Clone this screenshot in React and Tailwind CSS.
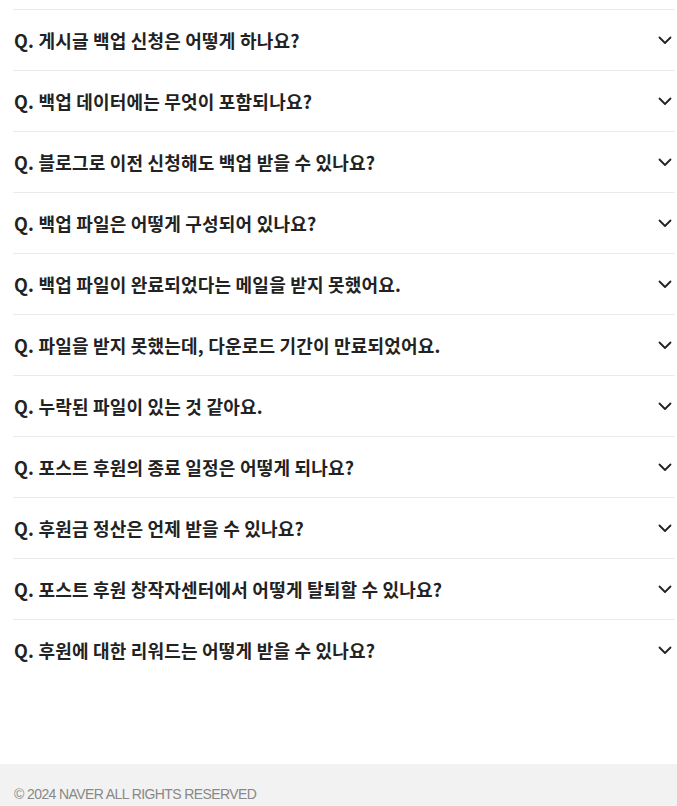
import React from "react";

const faqs = [
  "Q. 게시글 백업 신청은 어떻게 하나요?",
  "Q. 백업 데이터에는 무엇이 포함되나요?",
  "Q. 블로그로 이전 신청해도 백업 받을 수 있나요?",
  "Q. 백업 파일은 어떻게 구성되어 있나요?",
  "Q. 백업 파일이 완료되었다는 메일을 받지 못했어요.",
  "Q. 파일을 받지 못했는데, 다운로드 기간이 만료되었어요.",
  "Q. 누락된 파일이 있는 것 같아요.",
  "Q. 포스트 후원의 종료 일정은 어떻게 되나요?",
  "Q. 후원금 정산은 언제 받을 수 있나요?",
  "Q. 포스트 후원 창작자센터에서 어떻게 탈퇴할 수 있나요?",
  "Q. 후원에 대한 리워드는 어떻게 받을 수 있나요?",
];

const Chevron = () => (
  <svg width="14" height="9" viewBox="0 0 14 9" fill="none">
    <polyline
      points="1.5,1.5 7,7 12.5,1.5"
      stroke="#222"
      strokeWidth="1.8"
      strokeLinecap="round"
      strokeLinejoin="round"
    />
  </svg>
);

const App = () => {
  return (
    <div className="min-h-screen bg-white font-['Noto_Sans_CJK_KR','Noto_Sans',sans-serif]">
      {/* 자주 묻는 질문 목록 */}
      <ul className="pt-[9px] ml-[13px] mr-[2px]">
        {faqs.map((q, i) => (
          <li key={i} className="border-t border-[#ebebeb]">
            <button className="w-full h-[60px] flex items-center justify-between pl-px pr-[3px] text-left">
              <span className="text-[18px] font-bold tracking-[0.2px] text-[#222]">
                {q}
              </span>
              <Chevron />
            </button>
          </li>
        ))}
      </ul>

      <div className="h-[84px]" />

      {/* 하단 푸터 */}
      <footer className="bg-[#f2f2f2] h-[60px] pt-[20px] px-[14px]">
        <p className="text-[14px] text-[#888] font-['Liberation_Sans',Arial,sans-serif] tracking-[-0.6px]">
          © 2024 NAVER ALL RIGHTS RESERVED
        </p>
      </footer>
    </div>
  );
};

export default App;
